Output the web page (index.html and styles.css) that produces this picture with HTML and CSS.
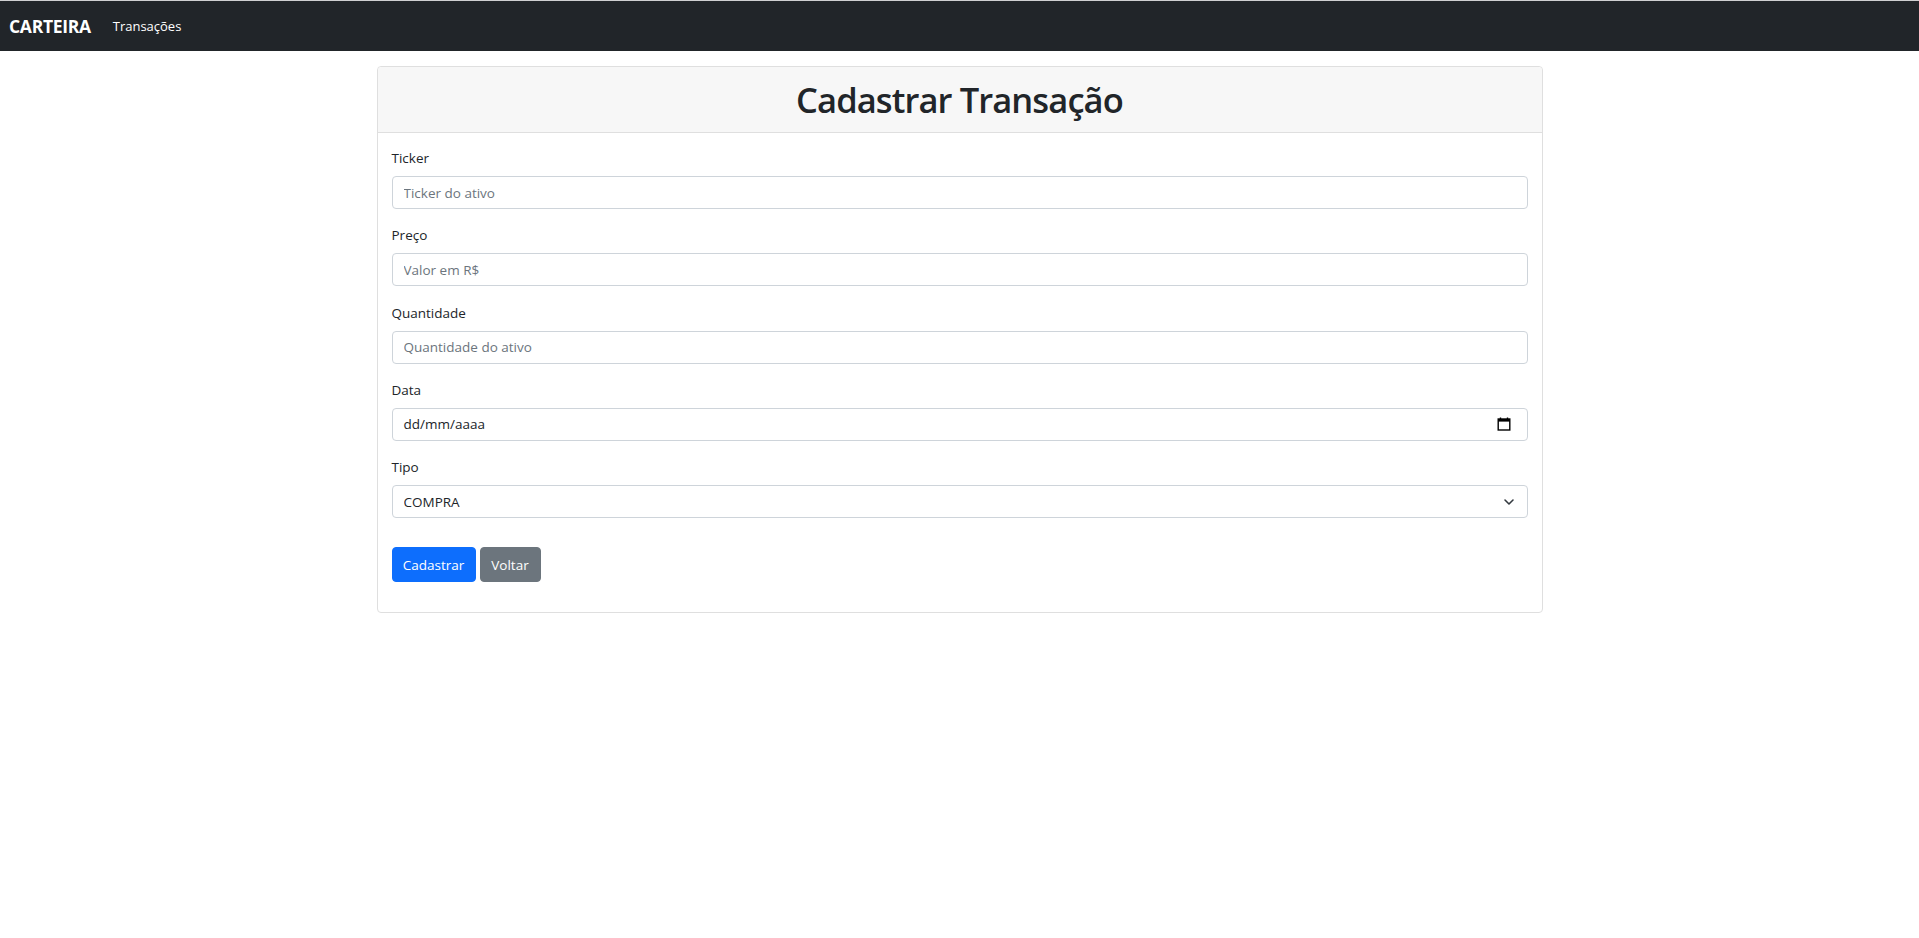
FILE: index.html
```html
<!DOCTYPE html>
<html lang="pt-BR">
<head>
<meta charset="utf-8">
<title>Cadastrar Transação</title>
<link rel="stylesheet" href="styles.css">
</head>
<body>
<nav class="navbar">
  <a class="brand" href="#">CARTEIRA</a>
  <a class="nav-link" href="#">Transações</a>
</nav>
<main class="container">
  <section class="card">
    <header class="card-header">
      <h1 class="title">Cadastrar Transação</h1>
    </header>
    <form class="card-body">
      <div class="group">
        <label class="label" for="ticker">Ticker</label>
        <input class="control" id="ticker" type="text" placeholder="Ticker do ativo">
      </div>
      <div class="group">
        <label class="label" for="preco">Preço</label>
        <input class="control" id="preco" type="text" placeholder="Valor em R$">
      </div>
      <div class="group">
        <label class="label" for="qtd">Quantidade</label>
        <input class="control" id="qtd" type="text" placeholder="Quantidade do ativo">
      </div>
      <div class="group">
        <label class="label" for="data">Data</label>
        <div class="control control-flex" id="data">
          <span class="value">dd/mm/aaaa</span>
          <svg class="cal-icon" width="14" height="14" viewBox="0 0 14 14" aria-hidden="true">
            <path d="M3.5 0.5v2M10.5 0.5v2" stroke="#000" stroke-width="1.4" fill="none"/>
            <rect x="1.2" y="2" width="11.6" height="11" fill="none" stroke="#000" stroke-width="1.4"/>
            <rect x="1.2" y="2" width="11.6" height="2.6" fill="#000"/>
          </svg>
        </div>
      </div>
      <div class="group group-last">
        <label class="label" for="tipo">Tipo</label>
        <div class="select-wrap">
          <select class="control select" id="tipo">
            <option>COMPRA</option>
            <option>VENDA</option>
          </select>
          <svg class="chevron" width="12" height="8" viewBox="0 0 12 8" aria-hidden="true">
            <path d="M2 2l4 4 4-4" stroke="#343a40" stroke-width="1.6" fill="none" stroke-linecap="round" stroke-linejoin="round"/>
          </svg>
        </div>
      </div>
      <div class="actions">
        <button class="btn btn-primary" type="submit">Cadastrar</button>
        <a class="btn btn-secondary" href="#">Voltar</a>
      </div>
    </form>
  </section>
</main>
</body>
</html>
```
FILE: styles.css
```css
* { box-sizing: border-box; }

html, body {
  margin: 0;
  padding: 0;
  background: #fff;
  color: #212529;
  font-family: "Open Sans", "Noto Sans", "Liberation Sans", sans-serif;
}

.navbar {
  display: flex;
  align-items: center;
  height: 51px;
  border-top: 1px solid #cfd0d1;
  background: #212529;
  padding: 0 0 0 9px;
}

.brand {
  color: #fff;
  font-weight: 700;
  font-size: 17.5px;
  text-decoration: none;
  margin-right: 22px;
  letter-spacing: -0.3px;
}

.nav-link {
  color: #fff;
  font-size: 13px;
  text-decoration: none;
}

.container {
  width: 1166px;
  margin: 15px auto 0;
}

.card {
  border: 1px solid #dfdfdf;
  border-radius: 4px;
  background: #fff;
}

.card-header {
  background: #f7f7f7;
  border-bottom: 1px solid #dfdfdf;
  border-radius: 4px 4px 0 0;
  padding: 8px 16px;
  height: 66px;
  display: flex;
  align-items: center;
  justify-content: center;
}

.title {
  margin: 0;
  font-size: 34.5px;
  font-weight: 600;
  line-height: 48px;
  letter-spacing: -0.9px;
}

.card-body {
  padding: 15px 14px 29.5px;
  margin: 0;
}

.group {
  margin-bottom: 16.25px;
}

.group-last {
  margin-bottom: 29px;
}

.label {
  display: block;
  font-size: 13.5px;
  line-height: 21px;
  margin-bottom: 7px;
}

.control {
  display: block;
  width: 100%;
  height: 33px;
  padding: 0 11px;
  font-family: inherit;
  font-size: 13.5px;
  color: #212529;
  background: #fff;
  border: 1px solid #ced4da;
  border-radius: 4px;
  outline: none;
}

.control::placeholder {
  color: #6c757d;
  opacity: 1;
}

.control-flex {
  display: flex;
  align-items: center;
  justify-content: space-between;
  padding-right: 16px;
}

.cal-icon {
  display: block;
}

.select-wrap {
  position: relative;
}

.select {
  appearance: none;
  -webkit-appearance: none;
}

.chevron {
  position: absolute;
  right: 13px;
  top: 13px;
  pointer-events: none;
}

.actions {
  display: flex;
  gap: 4px;
}

.btn {
  display: inline-flex;
  align-items: center;
  justify-content: center;
  height: 35px;
  padding: 0 12px;
  font-family: inherit;
  font-size: 13.5px;
  color: #fff;
  border: 1px solid transparent;
  border-radius: 4px;
  text-decoration: none;
  cursor: pointer;
}

.btn-primary {
  background: #0d6efd;
  border-color: #0d6efd;
  width: 84px;
}

.btn-secondary {
  background: #6c757d;
  border-color: #6c757d;
  width: 61px;
}
```
